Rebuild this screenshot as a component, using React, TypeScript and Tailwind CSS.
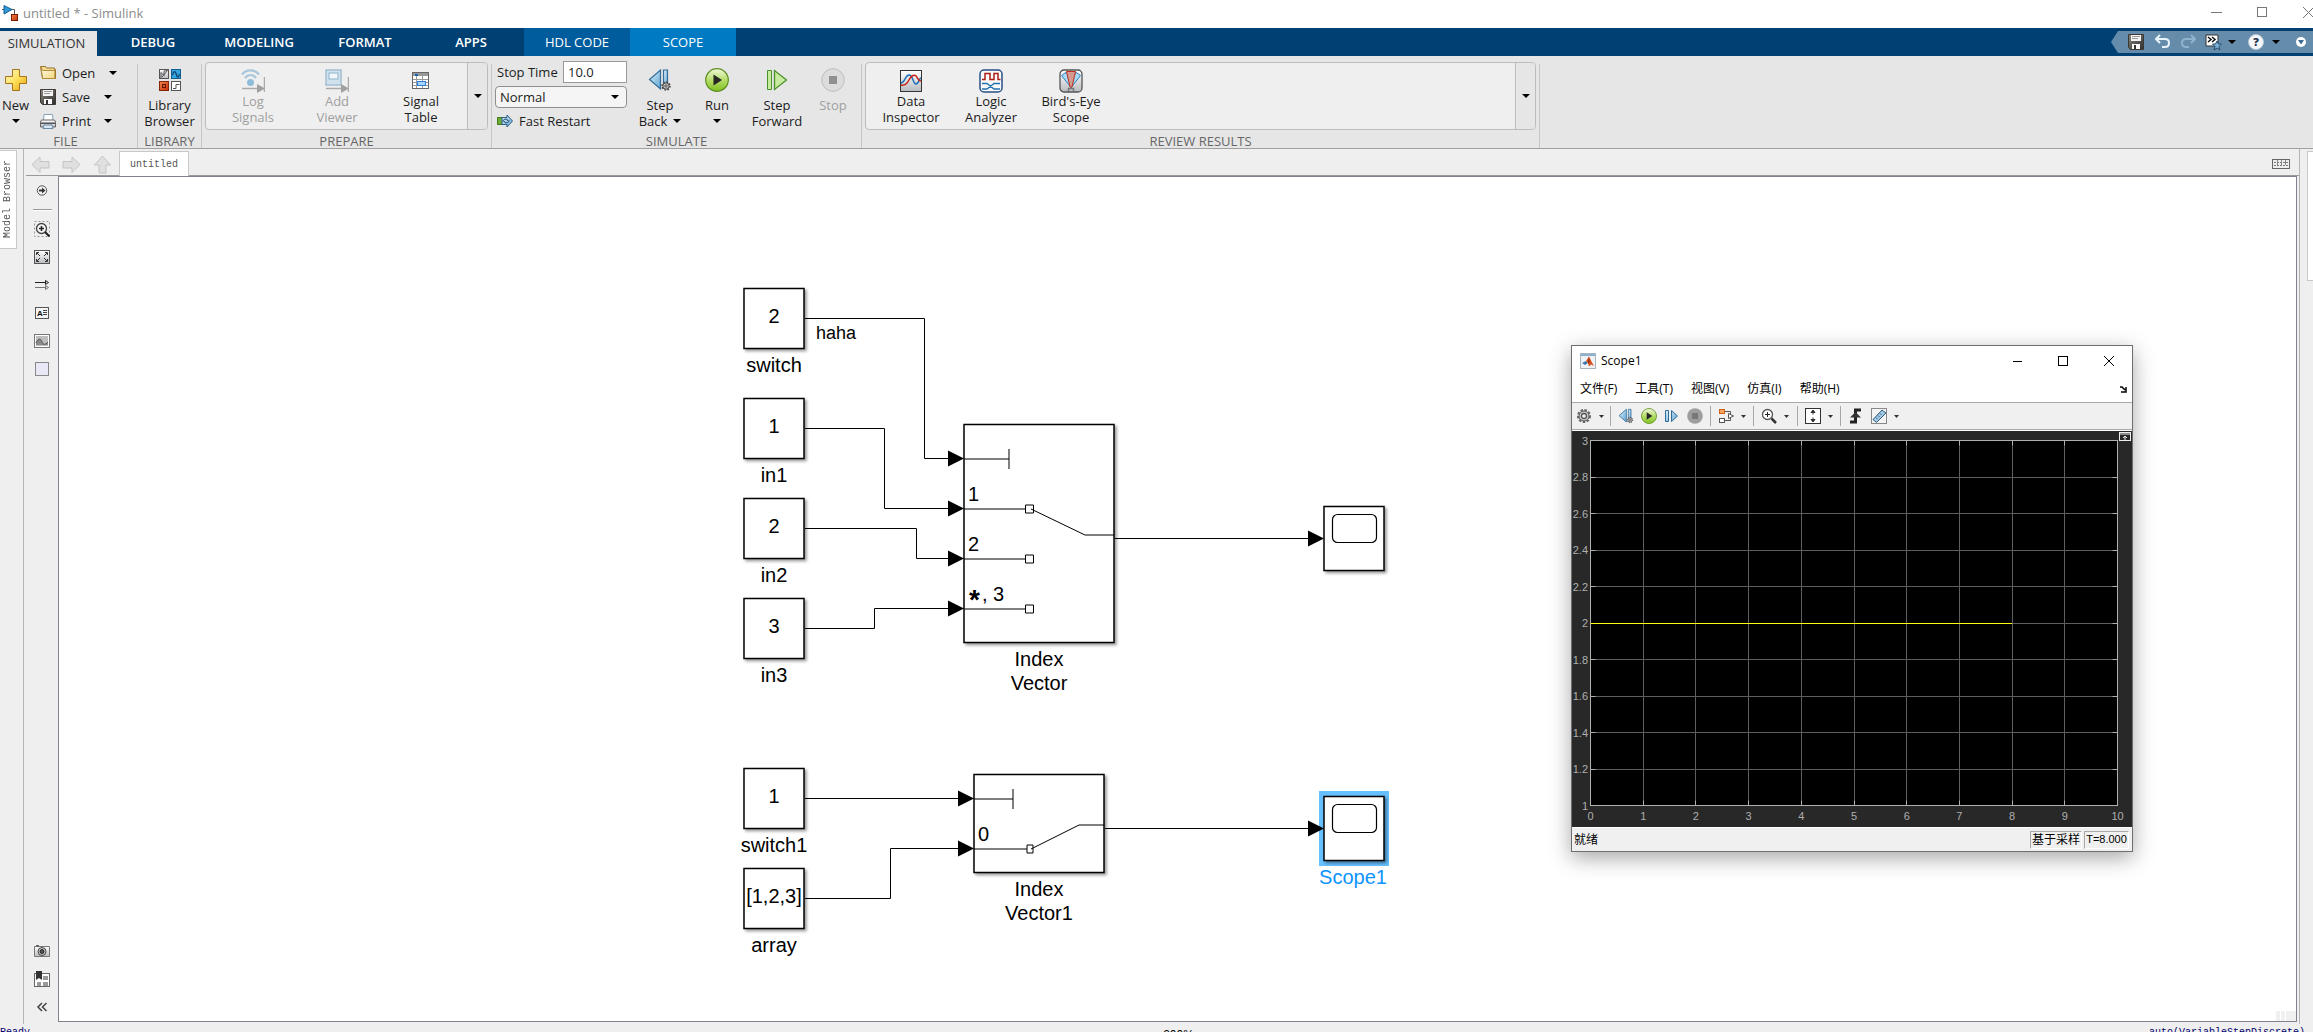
import type { ReactNode } from "react";

// Model coordinates start at the window corner, the canvas is inset by this much
const CANVAS_X = 59;
const CANVAS_Y = 177;

const tabs = ["DEBUG", "MODELING", "FORMAT", "APPS"];
const menus = ["文件(F)", "工具(T)", "视图(V)", "仿真(I)", "帮助(H)"];

function Gradients() {
    return (
        <svg className="absolute h-0 w-0" aria-hidden="true">
            <defs>
                <linearGradient id="gold" x1="0" y1="0" x2="1" y2="1">
                    <stop offset="0" stopColor="#fffbd0"/>
                    <stop offset="0.5" stopColor="#ffe05a"/>
                    <stop offset="1" stopColor="#e2a310"/>
                </linearGradient>
                <linearGradient id="folder" x1="0" y1="0" x2="1" y2="1">
                    <stop offset="0" stopColor="#fffef0"/>
                    <stop offset="1" stopColor="#f3d67c"/>
                </linearGradient>
                <linearGradient id="steel" x1="0" y1="0" x2="0" y2="1">
                    <stop offset="0" stopColor="#ffffff"/>
                    <stop offset="1" stopColor="#b9bcc0"/>
                </linearGradient>
                <linearGradient id="dark" x1="0" y1="0" x2="1" y2="1">
                    <stop offset="0" stopColor="#8b8680"/>
                    <stop offset="1" stopColor="#2e2c2a"/>
                </linearGradient>
                <linearGradient id="blue" x1="0" y1="0" x2="1" y2="1">
                    <stop offset="0" stopColor="#dff1fb"/>
                    <stop offset="1" stopColor="#5fa3d3"/>
                </linearGradient>
                <linearGradient id="green" x1="0" y1="0" x2="0" y2="1">
                    <stop offset="0" stopColor="#f0f8dc"/>
                    <stop offset="0.5" stopColor="#b6dd6a"/>
                    <stop offset="1" stopColor="#7fc11f"/>
                </linearGradient>
                <linearGradient id="red" x1="0" y1="0" x2="1" y2="1">
                    <stop offset="0" stopColor="#f08a4c"/>
                    <stop offset="1" stopColor="#c62d06"/>
                </linearGradient>
            </defs>
        </svg>
    );
}

function Icon({size = 16, box, children}: { size?: number; box?: string; children: ReactNode }) {
    return (
        <svg width={size} height={size} viewBox={box || `0 0 ${size} ${size}`} className="shrink-0" fill="none"
             aria-hidden="true">
            {children}
        </svg>
    );
}

function Caret({small}: { small?: boolean }) {
    return small ? (
        <svg width="5" height="3" viewBox="0 0 5 3" aria-hidden="true"><path d="M0 0h5L2.5 3z" fill="#333"/></svg>
    ) : (
        <svg width="8" height="4" viewBox="0 0 8 4" aria-hidden="true"><path d="M0 0h8L4 4z" fill="#000"/></svg>
    );
}

function SimulinkLogo() {
    return (
        <Icon>
            <path d="M0 4.500h12.500V9" stroke="#555"/>
            <path d="M2 .500v8.500l8-4.500z" fill="#2f9ad6" stroke="#165f92"/>
            <rect x="9.500" y="9.500" width="6" height="6" fill="url(#red)" stroke="#7c1d05"/>
        </Icon>
    );
}

function SaveIcon() {
    return (
        <Icon>
            <path d="M.500 .500h15v15h-13l-2-2z" fill="url(#dark)" stroke="#3d3935"/>
            <rect x="3" y="1" width="10" height="6" fill="#f4f4f4"/>
            <path d="M4 2.500h8M4 4.500h6" stroke="#999"/>
            <rect x="4" y="10" width="8" height="5" fill="#fafafa"/>
            <rect x="6" y="11" width="2" height="4" fill="#333"/>
        </Icon>
    );
}

function FolderIcon() {
    return (
        <Icon>
            <path d="M.500 1.500h5l1 1.500h8v1.500h1v9h-13z" fill="#f2dc94" stroke="#96722a"/>
            <path d="M.800 2l2 3.500h12v8h-12z" fill="url(#folder)" stroke="#b48c3a"/>
        </Icon>
    );
}

function PrintIcon() {
    return (
        <Icon>
            <path d="M4 1.500h8.500l.500 6H3.500z" fill="#fff" stroke="#8ba3b8"/>
            <path d="M1.500 7h13l1 2v5H.500V9z" fill="url(#steel)" stroke="#666"/>
            <path d="M1 9.500h14v1.500H1z" fill="#555"/>
            <path d="M4 12h8l1 3.500H3z" fill="#d7e9f7" stroke="#6d8aa5"/>
        </Icon>
    );
}

function PlusIcon() {
    return (
        <Icon size={22}>
            <path d="M7.500 .500h7v7h7v7h-7v7h-7v-7h-7v-7h7z" fill="url(#gold)" stroke="#a8741a"/>
        </Icon>
    );
}

function LibraryIcon() {
    return (
        <Icon size={22}>
            <rect x=".500" y=".500" width="9" height="9" fill="url(#steel)" stroke="#555"/>
            <path d="M2 9V3.500l3 3V2l3.500-.500L3 8" stroke="#555"/>
            <rect x="12.500" y=".500" width="9" height="9" fill="#35a3dd" stroke="#135f93"/>
            <path d="M13.500 6c1.500-5 3-4 4 0s2.500 2 3-1" stroke="#0f3f66" strokeWidth="1.200"/>
            <rect x=".500" y="12.500" width="9" height="9" fill="url(#red)" stroke="#8a2407"/>
            <rect x="3.500" y="15.500" width="3" height="3" stroke="#611300"/>
            <rect x="12.500" y="12.500" width="9" height="9" fill="#fff" stroke="#555"/>
            <path d="M14 19.500h3v-4h3.500" stroke="#555"/>
        </Icon>
    );
}

function LogSignalsIcon() {
    return (
        <Icon size={24}>
            <g stroke="#a9c6da" strokeWidth="2.200">
                <path d="M1 5.500C5 0 14 0 18 5.500"/>
                <path d="M4 9c3-4 8-4 11 0"/>
            </g>
            <circle cx="9.500" cy="13.500" r="3.500" fill="#8fbcda"/>
            <path d="M1 19.500h16M23.500 8v15" stroke="#aaa" strokeWidth="1.500"/>
            <path d="M16 15v9l8-4.500z" fill="#a0a0a0"/>
        </Icon>
    );
}

function AddViewerIcon() {
    return (
        <Icon size={24}>
            <rect x="1" y="1" width="15" height="15" fill="#cfe2ee" stroke="#a3bfd2" strokeWidth="1.500"/>
            <rect x="4" y="4" width="9" height="6" fill="#f0f6fa" stroke="#8fb3cc"/>
            <path d="M1 19.500h16M23.500 8v15" stroke="#aaa" strokeWidth="1.500"/>
            <path d="M16 15v9l8-4.500z" fill="#a0a0a0"/>
        </Icon>
    );
}

function SignalTableIcon() {
    return (
        <Icon size={24}>
            <rect x="3.500" y="3.500" width="16" height="16" fill="#fff" stroke="#666"/>
            <path d="M4 4h15v3H4z" fill="#999"/>
            <path d="M6 5h3v2H6z" fill="#1565b5"/>
            <path d="M4 10.500h15M4 13.500h15M4 16.500h15M7.500 7v12M13.500 7v12" stroke="#999"/>
            <rect x="8.500" y="12.500" width="8" height="4" fill="#a9d3ff" stroke="#2b7fd8"/>
        </Icon>
    );
}

function GearGlyph({x, y}: { x: number; y: number }) {
    return (
        <g transform={`translate(${x} ${y})`}>
            <circle r="4" stroke="#444" strokeWidth="1.500" strokeDasharray="1.600 1.500"/>
            <circle r="3.200" fill="#ccc" stroke="#444"/>
            <circle r="1.200" fill="#fff" stroke="#444"/>
        </g>
    );
}

function StepBackIcon({size = 24}: { size?: number }) {
    return (
        <Icon size={size} box="0 0 24 24">
            <path d="M12.500 2v19L1.500 11.500z" fill="url(#blue)" stroke="#326b96" strokeWidth="1.200"/>
            <path d="M15.500 2h4v18h-4z" fill="url(#blue)" stroke="#326b96" strokeWidth="1.200"/>
            <GearGlyph x={18} y={18}/>
        </Icon>
    );
}

function RunIcon({size = 24}: { size?: number }) {
    return (
        <Icon size={size} box="0 0 24 24">
            <circle cx="12" cy="12" r="11.300" fill="url(#green)" stroke="#5e8f22" strokeWidth="1.200"/>
            <path d="M8.500 6.500v11l8.500-5.500z" fill="#262626"/>
        </Icon>
    );
}

function StepForwardIcon() {
    return (
        <Icon size={24}>
            <path d="M2.500 2.500h4v19h-4z" fill="#c4ec9c" stroke="#4d8f2c"/>
            <path d="M9.500 2.500v19L21.500 12z" fill="#c4ec9c" stroke="#4d8f2c" strokeWidth="1.300"/>
        </Icon>
    );
}

function StopIcon() {
    return (
        <Icon size={24}>
            <circle cx="12" cy="12" r="11.300" fill="#dcdcdc" stroke="#bdbdbd"/>
            <path d="M8 8h8v8H8z" fill="#8f8f8f"/>
        </Icon>
    );
}

function FastRestartIcon() {
    return (
        <Icon>
            <path d="M.500 4.500h6v7h-6z" fill="#6fae36" stroke="#3e7a18"/>
            <path d="M5 4.500h5V2l5.500 6L10 14v-2.500H5z" fill="url(#blue)" stroke="#2b6087"/>
            <path d="M6 8.500c0-3 5-3 5-.500M12 7.500c0 3-5 3-5 .500" stroke="#173d5c"/>
        </Icon>
    );
}

function DataInspectorIcon() {
    return (
        <Icon size={22}>
            <rect x=".500" y=".500" width="21" height="21" fill="url(#steel)" stroke="#333"/>
            <path d="M1 13c4 0 4-8 8-8s4 9 7 9 3-6 5-6" stroke="#1d70b8" strokeWidth="1.500"/>
            <path d="M1 15c4 1 6-1 8-5s5-6 7-4 2 5 5 5" stroke="#cc2418" strokeWidth="1.500"/>
        </Icon>
    );
}

function LogicAnalyzerIcon() {
    return (
        <Icon size={24}>
            <rect x="1" y="1" width="22" height="22" rx="4" fill="#fafafa" stroke="#294f86" strokeWidth="1.500"/>
            <path d="M3 10.500h3v-6h5v6h4v-6h4v6h2.500" stroke="#a81f17" strokeWidth="1.500"/>
            <path d="M3 14.500h5l7 5.500h6M3 20h5l7-5.500h6" stroke="#2170b0" strokeWidth="1.300"/>
        </Icon>
    );
}

function BirdsEyeIcon() {
    return (
        <Icon size={24}>
            <rect x="1" y="1" width="22" height="22" rx="4" fill="url(#steel)" stroke="#555" strokeWidth="1.300"/>
            <path d="M2.500 6.500L7.500 3 12 18.500z" fill="#a9daf5" stroke="#2b7fbe"/>
            <path d="M21.500 6.500L16.500 3 12 18.500z" fill="#a9daf5" stroke="#2b7fbe"/>
            <path d="M7.500 2.500h9L13 18h-2z" fill="#d49a90" stroke="#c23022"/>
            <path d="M9.500 22v-2.500h5V22" stroke="#777" strokeWidth="1.500"/>
        </Icon>
    );
}

function BigButton({icon, lines, caret, disabled, width}: {
    icon: ReactNode;
    lines: string[];
    caret?: boolean;
    disabled?: boolean;
    width: string;
}) {
    return (
        <button disabled={disabled}
                className={`flex shrink-0 flex-col items-center leading-4 text-[#1c1c1c] disabled:text-[#a0a0a0] ${width}`}>
            <span className="mt-1.5 mb-[5px] flex h-6 items-center">{icon}</span>
            <span>{lines[0]}</span>
            <span className="flex h-4 items-center gap-1.5">{lines[1]}{caret && <Caret/>}</span>
        </button>
    );
}

function GalleryItem({icon, lines, disabled, width}: {
    icon: ReactNode;
    lines: string[];
    disabled?: boolean;
    width: string;
}) {
    return (
        <button disabled={disabled}
                className={`flex flex-col items-center leading-4 text-[#1c1c1c] disabled:text-[#a0a0a0] ${width}`}>
            <span className="mt-1.5 flex h-6 items-center">{icon}</span>
            <span>{lines[0]}</span>
            <span>{lines[1]}</span>
        </button>
    );
}

function Gallery({children, name}: { children: ReactNode; name: string }) {
    return (
        <div className="mx-[3px] mt-px flex h-[68px] flex-1 rounded border border-[#bcbcbc] bg-[#efefef]">
            <div className="flex flex-1 pl-[5px]">{children}</div>
            <button aria-label={name}
                    className="flex w-5 items-center justify-center rounded-r border-l border-[#bcbcbc] bg-[#e6e6e6]">
                <Caret/>
            </button>
        </div>
    );
}

function Section({title, width, children}: { title: string; width: string; children: ReactNode }) {
    return (
        <>
            <div className={`flex shrink-0 flex-col pt-[5px] ${width}`}>
                <div className="flex h-[72px] shrink-0">{children}</div>
                <div className="shrink-0 text-center leading-[17px] text-[#666]">{title}</div>
            </div>
            <div className="mt-2 w-px bg-[#c6c6c6]"/>
        </>
    );
}

function TitleBar() {
    return (
        <div className="flex h-7 shrink-0 items-center justify-between bg-white pb-0.5">
            <div className="flex items-center gap-[5px] pl-0.5 text-[#8c8c8c]">
                <SimulinkLogo/>
                <h1>untitled * - Simulink</h1>
            </div>
            <div className="-mr-px flex items-center gap-[35px] pb-0.5">
                <button aria-label="Minimize"><Icon size={11}><path d="M0 5.500h11" stroke="#777"/></Icon></button>
                <button aria-label="Maximize">
                    <Icon size={11}><rect x=".500" y=".500" width="9" height="9" stroke="#777"/></Icon>
                </button>
                <button aria-label="Close"><Icon size={11}><path d="M0 0l11 11M11 0L0 11" stroke="#777"/></Icon></button>
            </div>
        </div>
    );
}

function TabBar() {
    return (
        <div className="flex h-7 shrink-0 bg-[#004073] text-white">
            <button className="mt-[3px] mr-[3px] w-[97px] bg-[#e6e6e6] pr-1 pb-0.5 text-[#333]">SIMULATION</button>
            {tabs.map((tab) => (
                <button key={tab} className="w-[106px] font-semibold">{tab}</button>
            ))}
            <button className="w-[106px] bg-[#005c9c] font-medium">HDL CODE</button>
            <button className="w-[106px] bg-[#007bc3] font-medium">SCOPE</button>
            <div className="my-[3px] ml-auto flex">
                <svg width="7" height="22" aria-hidden="true"><path d="M7 0v22L0 11z" fill="#668cac"/></svg>
                <div className="flex items-center bg-[#668cac] pr-[7px] pl-[10px]">
                    <button aria-label="Save model"><SaveIcon/></button>
                    <button aria-label="Undo" className="ml-[11px]">
                        <Icon><path d="M5 1L1 5l4 4M1.500 5H10q4 0 4 4t-4 4H7" stroke="#eaf4fb" strokeWidth="2"/></Icon>
                    </button>
                    <button aria-label="Redo" className="ml-[9px]">
                        <Icon><path d="M11 1l4 4-4 4M14.500 5H6q-4 0-4 4t4 4h3" stroke="#8db3ce" strokeWidth="2"/></Icon>
                    </button>
                    <button aria-label="Favorites" className="ml-[9px] flex items-center gap-1.5">
                        <Icon size={17}>
                            <path d="M1 1h12v11H1z" fill="#fff" stroke="#333"/>
                            <path d="M3 3l3 2.500L3 8M7 3l3 2.500L7 8" stroke="#111" strokeWidth="1.500"/>
                            <path d="M12 7l1.500 3h3L14 12.500l1 3.500-3-2-3 2 1-3.500L7.500 10h3z" fill="#7ab0d8"
                                  stroke="#2a4c6b"/>
                        </Icon>
                        <Caret/>
                    </button>
                    <button aria-label="Help" className="ml-3 flex items-center gap-2">
                        <Icon>
                            <circle cx="8" cy="8" r="7.500" fill="#f5f7fa" stroke="#b7c8d6"/>
                            <text x="8" y="12" textAnchor="middle" fill="#1f3146"
                                  className="font-['Open_Sans',sans-serif] text-[11px] font-extrabold">?</text>
                        </Icon>
                        <Caret/>
                    </button>
                    <button aria-label="Toolstrip options" className="ml-4">
                        <Icon size={10}>
                            <circle cx="5" cy="5" r="5" fill="#fff"/>
                            <path d="M2 3h6L5 7.500z" fill="#3b6d96"/>
                        </Icon>
                    </button>
                </div>
            </div>
        </div>
    );
}

function FileRow({icon, label, gap}: { icon: ReactNode; label: string; gap: string }) {
    return (
        <button className="flex h-6 items-center text-[#1c1c1c]">
            {icon}
            <span className={`ml-1.5 text-left ${gap}`}>{label}</span>
            <Caret/>
        </button>
    );
}

function Ribbon() {
    return (
        <div className="flex h-[93px] shrink-0 overflow-hidden border-b border-[#a0a0a0] bg-[#e6e6e6]">
            <Section title="FILE" width="w-[137px] pr-1.5">
                <BigButton icon={<PlusIcon/>} lines={["New", ""]} caret width="w-[31px] pt-px"/>
                <div className="ml-[9px] flex flex-col items-start">
                    <FileRow icon={<FolderIcon/>} label="Open" gap="w-[47px]"/>
                    <FileRow icon={<SaveIcon/>} label="Save" gap="w-[42px]"/>
                    <FileRow icon={<PrintIcon/>} label="Print" gap="w-[42px]"/>
                </div>
            </Section>
            <Section title="LIBRARY" width="w-[63px]">
                <BigButton icon={<LibraryIcon/>} lines={["Library", "Browser"]} width="w-full pt-px"/>
            </Section>
            <Section title="PREPARE" width="w-[289px]">
                <Gallery name="More prepare tools">
                    <GalleryItem icon={<LogSignalsIcon/>} lines={["Log", "Signals"]} disabled width="w-[84px]"/>
                    <GalleryItem icon={<AddViewerIcon/>} lines={["Add", "Viewer"]} disabled width="w-[84px]"/>
                    <GalleryItem icon={<SignalTableIcon/>} lines={["Signal", "Table"]} width="w-[84px]"/>
                </Gallery>
            </Section>
            <Section title="SIMULATE" width="w-[369px]">
                <div className="ml-[3px] flex w-[132px] flex-col gap-[3px] text-[#1c1c1c]">
                    <div className="flex h-[22px] items-center justify-between pl-0.5">
                        <label htmlFor="stop-time">Stop Time</label>
                        <input id="stop-time" defaultValue="10.0"
                               className="h-[22px] w-16 border border-[#999] bg-white px-1"/>
                    </div>
                    <div className="relative">
                        <select aria-label="Simulation mode" defaultValue="Normal"
                                className="h-[22px] w-full appearance-none rounded border border-[#8f8f8f] bg-[#f5f5f5] px-1">
                            <option>Normal</option>
                            <option>Accelerator</option>
                        </select>
                        <span className="pointer-events-none absolute top-[9px] right-2"><Caret/></span>
                    </div>
                    <button className="flex h-5 items-center gap-1.5 pl-0.5">
                        <FastRestartIcon/> Fast Restart
                    </button>
                </div>
                <BigButton icon={<StepBackIcon/>} lines={["Step", "Back"]} caret width="ml-1 w-[58px] pt-px"/>
                <BigButton icon={<RunIcon/>} lines={["Run", ""]} caret width="w-14 pt-px"/>
                <BigButton icon={<StepForwardIcon/>} lines={["Step", "Forward"]} width="w-16 pt-px"/>
                <BigButton icon={<StopIcon/>} lines={["Stop", ""]} disabled width="w-12 pt-px"/>
            </Section>
            <Section title="REVIEW RESULTS" width="w-[677px]">
                <Gallery name="More review tools">
                    <GalleryItem icon={<DataInspectorIcon/>} lines={["Data", "Inspector"]} width="w-20"/>
                    <GalleryItem icon={<LogicAnalyzerIcon/>} lines={["Logic", "Analyzer"]} width="w-20"/>
                    <GalleryItem icon={<BirdsEyeIcon/>} lines={["Bird's-Eye", "Scope"]} width="w-20"/>
                </Gallery>
            </Section>
        </div>
    );
}

function NavBar() {
    return (
        <div className="ml-0.5 flex h-[27px] shrink-0 items-end justify-between border-b border-[#9a9a9a]">
            <div className="flex items-end">
                <div className="flex items-center gap-3 pr-[7px] pb-px pl-[5px]">
                    <button aria-label="Back">
                        <Icon size={19}><path d="M1 9.500L9 2v4.500h9v6.500H9v4.500z" fill="#e0e0e0" stroke="#c4c4c4"/></Icon>
                    </button>
                    <button aria-label="Forward">
                        <Icon size={19}><path d="M18 9.500L10 2v4.500H1v6.500h9v4.500z" fill="#e0e0e0" stroke="#c4c4c4"/></Icon>
                    </button>
                    <button aria-label="Up to parent">
                        <Icon size={19}><path d="M9.500 1L1.500 10h4.500v8h7v-8h4.500z" fill="#e0e0e0" stroke="#c4c4c4"/></Icon>
                    </button>
                </div>
                <button
                    className="-mb-px h-[25px] w-[70px] border border-b-0 border-[#c8c8c8] bg-white pt-0.5 font-['Liberation_Mono',monospace] text-[10px] text-[#555]">
                    untitled
                </button>
            </div>
            <button aria-label="Keyboard shortcuts" className="mr-[9px] mb-1.5">
                <svg width="18" height="10" fill="none" aria-hidden="true">
                    <rect x=".500" y=".500" width="17" height="9" fill="#eee" stroke="#666"/>
                    <path d="M2 3.500h14M2 6.500h14" stroke="#777" strokeDasharray="2 1"/>
                    <path d="M5.500 1v5M9.500 1v5M13.500 1v5" stroke="#888"/>
                </svg>
            </button>
        </div>
    );
}

function PaletteButton({name, children}: { name: string; children: ReactNode }) {
    return (
        <button aria-label={name} className="flex h-7 w-full items-center justify-center">
            <Icon>{children}</Icon>
        </button>
    );
}

function Palette() {
    return (
        <div className="flex w-[34px] shrink-0 flex-col items-center justify-between pb-px pl-0.5">
            <div className="flex w-full flex-col items-center">
                <PaletteButton name="Explore">
                    <circle cx="8" cy="8.500" r="4.700" fill="#f5f5f5" stroke="#555"/>
                    <path d="M5 7.500h3v-2l3.500 3-3.500 3v-2H5z" fill="#333"/>
                </PaletteButton>
                <div className="mt-[5px] mb-1 h-0.5 w-[19px] border-t border-[#9a9a9a] bg-white"/>
                <PaletteButton name="Zoom">
                    <rect x=".500" y=".500" width="15" height="15" stroke="#999" strokeDasharray="2 2"/>
                    <circle cx="7.500" cy="7.500" r="5" fill="#f5f5f5" stroke="#444" strokeWidth="1.300"/>
                    <path d="M5 7.500h5M7.500 5v5" stroke="#222" strokeWidth="1.500"/>
                    <path d="M11 11l4.500 4.500" stroke="#222" strokeWidth="2"/>
                </PaletteButton>
                <PaletteButton name="Fit to view">
                    <rect x=".500" y="1.500" width="15" height="13" fill="url(#steel)" stroke="#555"/>
                    <path d="M2.500 6V3.500H5M3 4l3 3M13.500 6V3.500H11M13 4l-3 3M2.500 10v2.500H5M3 12l3-3M13.500 10v2.500H11M13 12l-3-3"
                          stroke="#333"/>
                </PaletteButton>
                <PaletteButton name="Sample time">
                    <path d="M1 5.500h11" stroke="#222"/>
                    <path d="M1 10.500h11" stroke="#777"/>
                    <path d="M11.500 3.500l3 2-3 2z" fill="#ddd" stroke="#222"/>
                    <path d="M11.500 8.500l3 2-3 2z" fill="#ddd" stroke="#777"/>
                </PaletteButton>
                <PaletteButton name="Annotation">
                    <rect x="1.500" y="2.500" width="13" height="11" fill="#f4f4f4" stroke="#555"/>
                    <text x="3" y="11" fill="#111"
                          className="font-['Liberation_Sans',sans-serif] text-[8px] font-bold">A</text>
                    <path d="M9 5.500h4M9 7.500h4M9 9.500h4" stroke="#444"/>
                </PaletteButton>
                <PaletteButton name="Image">
                    <rect x=".500" y="1.500" width="15" height="13" fill="#fff" stroke="#777"/>
                    <path d="M2 3h12v10H2z" fill="#bdbdbd"/>
                    <path d="M2 10c3-6 5-4 6-1s3 3 6 0v3H2z" fill="#8c8c8c"/>
                    <path d="M2 10c3-6 5-4 6-1s3 3 6 0" stroke="#555"/>
                </PaletteButton>
                <PaletteButton name="Area">
                    <rect x="1.500" y="1.500" width="13" height="13" fill="#e8e8f6" stroke="#888"/>
                </PaletteButton>
            </div>
            <div className="w-full">
                <PaletteButton name="Screenshot">
                    <path d="M.500 3.500h15v10H.500z" fill="url(#steel)" stroke="#777"/>
                    <path d="M2 2h3v2H2z" fill="#666"/>
                    <circle cx="8" cy="8.500" r="4" fill="#ccc" stroke="#444"/>
                    <circle cx="8" cy="8.500" r="2" fill="#555" stroke="#222"/>
                </PaletteButton>
                <PaletteButton name="Model data">
                    <rect x=".500" y="2.500" width="15" height="13" fill="#fff" stroke="#666"/>
                    <path d="M9 5h5v4H9zM9 11h5v4H9zM3 11h4v4H3z" fill="#999"/>
                    <path d="M2 0h6v9L5 7l-3 2z" fill="#333"/>
                </PaletteButton>
                <PaletteButton name="Collapse palette">
                    <path d="M8 4L4 8l4 4M12.500 4l-4 4 4 4" stroke="#444" strokeWidth="1.500"/>
                </PaletteButton>
            </div>
        </div>
    );
}

function Label({x, y, children}: { x: number; y: number; children: ReactNode }) {
    return <text x={x} y={y} textAnchor="middle">{children}</text>;
}

function ConstantBlock({y, value, name}: { y: number; value: string; name: string }) {
    return (
        <g>
            <rect x={744} y={y} width={60} height={60} fill="#fff" stroke="#000" strokeWidth="1.500"
                  filter="url(#block-shadow)"/>
            <Label x={774} y={y + 34}>{value}</Label>
            <Label x={774} y={y + 83}>{name}</Label>
        </g>
    );
}

function ScopeBlock({y}: { y: number }) {
    return (
        <g>
            <rect x={1324} y={y} width={60} height={64} fill="#fff" stroke="#000" strokeWidth="1.500"
                  filter="url(#block-shadow)"/>
            <rect x={1332.5} y={y + 8} width={44} height={28} rx={5} fill="none" stroke="#000" strokeWidth="1.200"/>
        </g>
    );
}

function Arrow({x, y}: { x: number; y: number }) {
    return <path d={`M${x} ${y}l-16 -8v16z`} fill="#000"/>;
}

function Diagram() {
    return (
        <svg className="absolute inset-0 h-full w-full font-['Liberation_Sans',Arial,sans-serif] text-xl" fill="#000">
            <defs>
                <filter id="block-shadow" x="-20%" y="-20%" width="150%" height="150%">
                    <feDropShadow dx="2" dy="2" stdDeviation="1.500" floodColor="#000" floodOpacity="0.400"/>
                </filter>
            </defs>
            <g transform={`translate(${-CANVAS_X} ${-CANVAS_Y})`}>
                {/* Signal lines */}
                <g fill="none" stroke="#000">
                    <path d="M805 318.500H924.500V458.500H960"/>
                    <path d="M805 428.500H884.500V508.500H960"/>
                    <path d="M805 528.500H916.500V558.500H960"/>
                    <path d="M805 628.500H874.500V608.500H960"/>
                    <path d="M1115 538.500H1320"/>
                    <path d="M805 798.500H970"/>
                    <path d="M805 898.500H890.500V848.500H970"/>
                    <path d="M1105 828.500H1320"/>
                </g>

                <ConstantBlock y={288.5} value="2" name="switch"/>
                <ConstantBlock y={398.5} value="1" name="in1"/>
                <ConstantBlock y={498.5} value="2" name="in2"/>
                <ConstantBlock y={598.5} value="3" name="in3"/>
                <ConstantBlock y={768.5} value="1" name="switch1"/>
                <ConstantBlock y={868.5} value="[1,2,3]" name="array"/>
                <text x={816} y={339} className="text-lg">haha</text>

                {/* Index Vector */}
                <rect x={964} y={424.5} width={150} height={218} fill="#fff" stroke="#000" strokeWidth="1.500"
                      filter="url(#block-shadow)"/>
                <g fill="none" stroke="#000">
                    <path d="M964 459H1009M1009 449V469M964 509H1025M964 559H1025M964 609H1025"/>
                    <path d="M1025.500 505h8v8h-8zM1025.500 555h8v8h-8zM1025.500 605h8v8h-8z"/>
                    <path d="M1031 509L1085 535H1114"/>
                </g>
                <text x={968} y={501}>1</text>
                <text x={968} y={551}>2</text>
                <text x={969} y={609} className="text-[28px] font-bold">*</text>
                <text x={982} y={601}>, 3</text>
                <Label x={1039} y={666}>Index</Label>
                <Label x={1039} y={690}>Vector</Label>

                {/* Index Vector1 */}
                <rect x={974} y={774.5} width={130} height={98} fill="#fff" stroke="#000" strokeWidth="1.500"
                      filter="url(#block-shadow)"/>
                <g fill="none" stroke="#000">
                    <path d="M974 799H1013M1013 789V809M974 849H1027"/>
                    <path d="M1027 845h6v8h-6z"/>
                    <path d="M1031 849L1079 825H1104"/>
                </g>
                <text x={978} y={841}>0</text>
                <Label x={1039} y={896}>Index</Label>
                <Label x={1039} y={920}>Vector1</Label>

                <ScopeBlock y={506.5}/>
                <rect x={1319} y={791} width={70} height={75} fill="#66bfff"/>
                <ScopeBlock y={796.5}/>
                <text x={1353} y={884} textAnchor="middle" fill="#0d94ff">Scope1</text>

                <Arrow x={964} y={458.5}/>
                <Arrow x={964} y={508.5}/>
                <Arrow x={964} y={558.5}/>
                <Arrow x={964} y={608.5}/>
                <Arrow x={974} y={798.5}/>
                <Arrow x={974} y={848.5}/>
                <Arrow x={1324} y={538.5}/>
                <Arrow x={1324} y={828.5}/>
            </g>
        </svg>
    );
}

function ScopePlot() {
    const left = 18.5;
    const right = 545.5;
    const top = 9.5;
    const bottom = 374.5;
    const stepX = (right - left) / 10;
    const stepY = (bottom - top) / 10;
    const ticks = Array.from({length: 11}, (_, i) => i);

    return (
        <svg viewBox="0 0 560 396" className="w-full bg-[#282828] font-['Liberation_Sans',Arial,sans-serif] text-[11px]"
             fill="#afafaf">
            <rect x={left} y={top} width={right - left} height={bottom - top} fill="#000"/>
            {ticks.slice(1, 10).map((i) => {
                const x = Math.floor(left + i * stepX) + 0.5;
                const y = Math.floor(top + i * stepY) + 0.5;
                return (
                    <g key={i}>
                        <path d={`M${x} ${top}V${bottom}M${left} ${y}H${right}`} stroke="#5e5e5e"/>
                        <path d={`M${x} ${top}v5M${x} ${bottom}v-5M${left} ${y}h5M${right} ${y}h-5`} stroke="#afafaf"/>
                    </g>
                );
            })}
            <rect x={left} y={top} width={right - left} height={bottom - top} fill="none" stroke="#afafaf"/>
            <path d={`M${left} 192.500H${left + 8 * stepX}`} stroke="#ffff11"/>
            {ticks.map((i) => (
                <text key={i} x={left + i * stepX} y={389} textAnchor="middle">{i}</text>
            ))}
            {ticks.map((i) => (
                <text key={i} x={16} y={top + i * stepY + 4} textAnchor="end">
                    {String(Math.round((3 - i * 0.2) * 10) / 10)}
                </text>
            ))}
            <rect x="547.500" y="1.500" width="11" height="8" fill="none" stroke="#eee"/>
            <path d="M547 3h12M553 9V5M551 7l2-2 2 2" fill="none" stroke="#eee"/>
        </svg>
    );
}

function ToolSeparator() {
    return <span className="h-5 w-px shrink-0 bg-[#a8a8a8]"/>;
}

function ScopeToolbar() {
    return (
        <div className="flex h-7 items-center border-t border-b border-[#a8a8a8] bg-[#f0f0f0] pl-1">
            <button aria-label="Configuration" className="flex w-[34px] shrink-0 items-center gap-[7px]">
                <Icon>
                    <circle cx="8" cy="8" r="6" stroke="#666" strokeWidth="2" strokeDasharray="2.500 1.500"/>
                    <circle cx="8" cy="8" r="5" fill="#ccc" stroke="#555"/>
                    <circle cx="8" cy="8" r="2.500" fill="#f0f0f0" stroke="#555" strokeWidth="1.300"/>
                </Icon>
                <Caret small/>
            </button>
            <ToolSeparator/>
            <div className="flex w-[99px] shrink-0 items-center gap-[7px] pl-[7px]">
                <button aria-label="Step back"><StepBackIcon size={16}/></button>
                <button aria-label="Run"><RunIcon size={16}/></button>
                <button aria-label="Step forward">
                    <Icon>
                        <path d="M1.500 2.500h3v11h-3zM7.500 2.500v11l6-5.500z" fill="url(#blue)" stroke="#326b96"/>
                    </Icon>
                </button>
                <button aria-label="Stop" disabled>
                    <Icon>
                        <circle cx="8" cy="8" r="7.800" fill="#9e9e9e"/>
                        <path d="M5 5h6v6H5z" fill="#777"/>
                    </Icon>
                </button>
            </div>
            <ToolSeparator/>
            <button aria-label="Highlight block" className="flex w-[42px] shrink-0 items-center gap-[7px] pl-[7px]">
                <Icon>
                    <path d="M7 3.500h5.500V6M7 12.500h5.500V10" stroke="#555"/>
                    <rect x="1.500" y="1.500" width="5" height="4" fill="#f7a35c" stroke="#d0601a"/>
                    <rect x="1.500" y="10.500" width="5" height="4" fill="#fff" stroke="#555"/>
                    <path d="M10.500 5.500v5l5-2.500z" fill="#fff" stroke="#555"/>
                </Icon>
                <Caret small/>
            </button>
            <ToolSeparator/>
            <button aria-label="Zoom in" className="flex w-[43px] shrink-0 items-center gap-[7px] pl-[7px]">
                <Icon>
                    <circle cx="6.500" cy="6.500" r="5" fill="#fff" stroke="#555" strokeWidth="1.300"/>
                    <path d="M4 6.500h5M6.500 4v5" stroke="#222"/>
                    <path d="M10.500 10.500L15 15" stroke="#333" strokeWidth="2.500"/>
                </Icon>
                <Caret small/>
            </button>
            <ToolSeparator/>
            <button aria-label="Scale axes" className="flex w-[42px] shrink-0 items-center gap-[7px] pl-[7px]">
                <Icon>
                    <rect x=".500" y=".500" width="15" height="15" fill="#fff" stroke="#333"/>
                    <path d="M6 4.500h4L8 2zM6 11.500h4L8 14z" fill="#333" stroke="#333"/>
                    <path d="M8 4v2.500M8 9.500V12" stroke="#333"/>
                </Icon>
                <Caret small/>
            </button>
            <ToolSeparator/>
            <button aria-label="Triggers" className="ml-1.5">
                <Icon>
                    <path d="M14 2H8.500v12H3" stroke="#222" strokeWidth="3"/>
                    <path d="M3 9.500L8.500 4l5.500 5.500z" fill="#333"/>
                </Icon>
            </button>
            <button aria-label="Measurements" className="ml-2 flex items-center gap-[7px]">
                <Icon>
                    <rect x=".500" y=".500" width="15" height="15" fill="#f4f4f4" stroke="#888"/>
                    <path d="M2 11.500l9-9.500 4 3-9.500 9.500z" fill="#9fc8e4" stroke="#325f80"/>
                    <path d="M5 9.500l1.500 1.500M7 7.500L8.500 9M9 5.500L10.500 7" stroke="#325f80"/>
                </Icon>
                <Caret small/>
            </button>
        </div>
    );
}

function ScopeWindow() {
    return (
        <section
            className="absolute top-[168px] left-[1512px] w-[562px] border border-[#6e6e6e] bg-white font-['Open_Sans','Noto_Sans_CJK_SC',sans-serif] text-xs text-black shadow-[0_6px_20px_rgba(0,0,0,0.35)]">
            <div className="flex h-[30px] items-center justify-between pr-[17px] pl-2">
                <div className="flex items-center gap-[5px]">
                    <Icon>
                        <rect x=".500" y=".500" width="15" height="15" fill="#eef2f6" stroke="#a8b4be"/>
                        <path d="M1 1h14v2H1z" fill="#8fb0cc"/>
                        <path d="M2 10l4-2 2 2-3 2z" fill="#3b78b4"/>
                        <path d="M6 8l3-4.500 2.500 5L14 13l-3-1.500-2 2-1-3.500z" fill="#d9501e"/>
                        <path d="M9 3.500l.500 5L8 11z" fill="#7a1d10"/>
                    </Icon>
                    <h2>Scope1</h2>
                </div>
                <div className="flex items-center gap-[35px] pb-0.5">
                    <button aria-label="Minimize scope">
                        <Icon size={11}><path d="M1 6.500h9" stroke="#000"/></Icon>
                    </button>
                    <button aria-label="Maximize scope">
                        <Icon size={11}><rect x=".500" y="1.500" width="9" height="9" stroke="#000"/></Icon>
                    </button>
                    <button aria-label="Close scope">
                        <Icon size={11}><path d="M0 1l10 10M10 1L0 11" stroke="#000"/></Icon>
                    </button>
                </div>
            </div>
            <div className="flex h-[26px] items-center justify-between pr-[5px] pl-2">
                <div className="flex gap-[18px]">
                    {menus.map((menu) => (
                        <button key={menu}>{menu}</button>
                    ))}
                </div>
                <Icon size={7}><path d="M0 1h2l3 3M6 1v5H1" stroke="#000" strokeWidth="1.500"/></Icon>
            </div>
            <ScopeToolbar/>
            <div className="pt-px"><ScopePlot/></div>
            <div className="flex h-6 items-center justify-between border-t border-white bg-[#f0f0f0] pr-[3px] pl-0.5">
                <span>就绪</span>
                <div className="flex gap-0.5">
                    <span
                        className="flex h-[18px] w-[52px] items-center justify-center border border-[#aaa] border-r-white border-b-white">
                        基于采样
                    </span>
                    <span
                        className="flex h-[18px] w-[45px] items-center justify-center border border-[#aaa] border-r-white border-b-white font-['Liberation_Sans',Arial,sans-serif] text-[11px]">
                        T=8.000
                    </span>
                </div>
            </div>
        </section>
    );
}

export default function App() {
    return (
        <div
            className="flex h-screen flex-col overflow-hidden bg-[#efefef] font-['Open_Sans','Noto_Sans',sans-serif] text-[13px] leading-4">
            <Gradients/>
            <TitleBar/>
            <TabBar/>
            <Ribbon/>
            <div className="flex min-h-0 flex-1">
                <div className="w-6 shrink-0 border-r border-[#b5b5b5] pt-px">
                    <button
                        className="flex h-[99px] w-[17px] items-center justify-center border border-l-0 border-[#c8c8c8] bg-white">
                        <span
                            className="rotate-180 font-['Liberation_Mono',monospace] text-[10px] leading-4 text-[#555] [writing-mode:vertical-rl]">
                            Model Browser
                        </span>
                    </button>
                </div>
                <div className="flex min-w-0 flex-1 flex-col">
                    <NavBar/>
                    <div className="flex min-h-0 flex-1 pr-[2px] pb-[2px]">
                        <Palette/>
                        <main className="relative min-w-0 flex-1 overflow-hidden border border-[#83838f] bg-white">
                            <Diagram/>
                            <ScopeWindow/>
                            <div className="absolute right-0 bottom-0 flex gap-px">
                                <span className="h-2.5 w-1 bg-[#f0f0f0]"/>
                                <span className="h-2.5 w-1 bg-[#f0f0f0]"/>
                                <span className="h-2.5 w-2.5 bg-[#f0f0f0]"/>
                            </div>
                        </main>
                    </div>
                </div>
                <div className="w-3.5 shrink-0 border-l border-[#b5b5b5] pt-0.5 pl-[7px]">
                    <div className="h-[130px] border border-r-0 border-[#c8c8c8] bg-white"/>
                </div>
            </div>
            <footer
                className="flex h-2 shrink-0 justify-between overflow-hidden pt-[3px] pr-2 font-['Liberation_Mono',monospace] text-[10px] leading-3 text-[#00006e]">
                <span className="flex-1">Ready</span>
                <span className="pl-[52px] font-['Liberation_Sans',Arial,sans-serif] text-xs text-black">200%</span>
                <span className="flex-1 text-right">auto(VariableStepDiscrete)</span>
            </footer>
        </div>
    );
}
